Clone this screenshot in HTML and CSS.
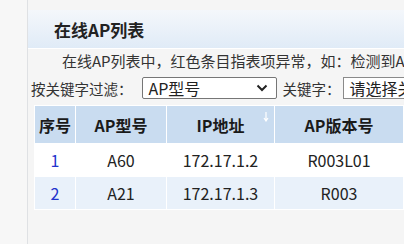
FILE: index.html
```html
<!DOCTYPE html>
<html lang="zh-CN">
<head>
    <meta charset="UTF-8">
    <title>在线AP列表</title>
    <link rel="stylesheet" href="styles.css">
</head>
<body>
    <div class="layout">
        <div class="sidebar"></div>
        <div class="main">
            <div class="title-bar">
                <h1>在线AP列表</h1>
            </div>
            <p class="desc">在线AP列表中，红色条目指表项异常，如：检测到AP异常离线等</p>
            <div class="filter">
                <span class="label">按关键字过滤：</span>
                <div class="select">
                    <span>AP型号</span>
                    <svg class="chevron" width="12" height="8" viewBox="0 0 12 8">
                        <path d="M1.5 1.5 L6 6 L10.5 1.5" fill="none" stroke="#222" stroke-width="2"/>
                    </svg>
                </div>
                <span class="label">关键字：</span>
                <div class="select keyword">
                    <span>请选择关键字</span>
                </div>
            </div>
            <table class="ap-table">
                <thead>
                    <tr>
                        <th class="col-no">序号</th>
                        <th class="col-model">AP型号</th>
                        <th class="col-ip">IP地址
                            <svg class="sort" width="6" height="10" viewBox="0 0 6 10">
                                <path d="M3 0 V8 M1 6 L3 9 L5 6" fill="none" stroke="#fff" stroke-width="1.2"/>
                            </svg>
                        </th>
                        <th class="col-ver">AP版本号</th>
                    </tr>
                </thead>
                <tbody>
                    <tr>
                        <td class="no">1</td>
                        <td>A60</td>
                        <td>172.17.1.2</td>
                        <td>R003L01</td>
                    </tr>
                    <tr class="alt">
                        <td class="no">2</td>
                        <td>A21</td>
                        <td>172.17.1.3</td>
                        <td>R003</td>
                    </tr>
                </tbody>
            </table>
        </div>
    </div>
</body>
</html>
```

FILE: styles.css
```css
body {
    margin: 0;
    background-color: #f5f5f5;
    font-family: "Noto Sans CJK SC", "Noto Sans", sans-serif;
    color: #333;
    overflow: hidden;
}
.layout {
    display: flex;
    height: 244px;
}
.sidebar {
    width: 27px;
    flex: none;
    background-color: #f7f7f7;
    border-right: 1px solid #dfe1e4;
}
.main {
    flex: 1;
    min-width: 0;
    padding-top: 10px;
    white-space: nowrap;
    overflow: hidden;
}
.title-bar {
    height: 38px;
    display: flex;
    align-items: center;
    padding-left: 26px;
    background: linear-gradient(to bottom, #f4f7fb, #e0ebf7);
    border-bottom: 1px solid #ffffff;
}
.title-bar h1 {
    margin: 0;
    font-size: 17px;
    font-weight: bold;
    color: #222;
}
.desc {
    margin: 0;
    height: 24px;
    line-height: 24px;
    padding-left: 4px;
    text-indent: 30px;
    font-size: 15px;
    color: #333;
}
.filter {
    display: flex;
    align-items: center;
    height: 28px;
    padding-left: 3px;
    margin-top: 1px;
}
.label {
    flex: none;
    font-size: 14.5px;
    color: #333;
}
.select {
    flex: none;
    display: flex;
    align-items: center;
    justify-content: space-between;
    box-sizing: border-box;
    height: 22px;
    width: 135px;
    margin: 0 6px 0 9px;
    padding: 0 8px 0 6px;
    background-color: #ffffff;
    border: 1px solid #767676;
    border-radius: 2px;
    font-size: 16px;
    color: #222;
}
.select.keyword {
    width: 140px;
    margin-left: 2px;
    border-color: #8a8a8a;
    border-radius: 0;
}
.chevron {
    flex: none;
}
.ap-table {
    margin: 3px 0 0 6px;
    border-collapse: collapse;
    table-layout: fixed;
    width: 370px;
}
.ap-table th,
.ap-table td {
    border: 1px solid #ffffff;
    text-align: center;
    padding: 0;
}
.ap-table th {
    height: 37px;
    background-color: #c9dcf0;
    font-size: 16px;
    font-weight: bold;
    color: #1a1a1a;
    position: relative;
}
.ap-table td {
    height: 32px;
    font-size: 16px;
    color: #222;
    background-color: #ffffff;
}
.ap-table tr.alt td {
    background-color: #e9f1fa;
}
.ap-table td.no {
    color: #2233cc;
}
.col-no { width: 40px; }
.col-model { width: 90px; }
.col-ip { width: 107px; }
.col-ver { width: 128px; }
.sort {
    position: absolute;
    right: 5px;
    top: 6px;
}
```
